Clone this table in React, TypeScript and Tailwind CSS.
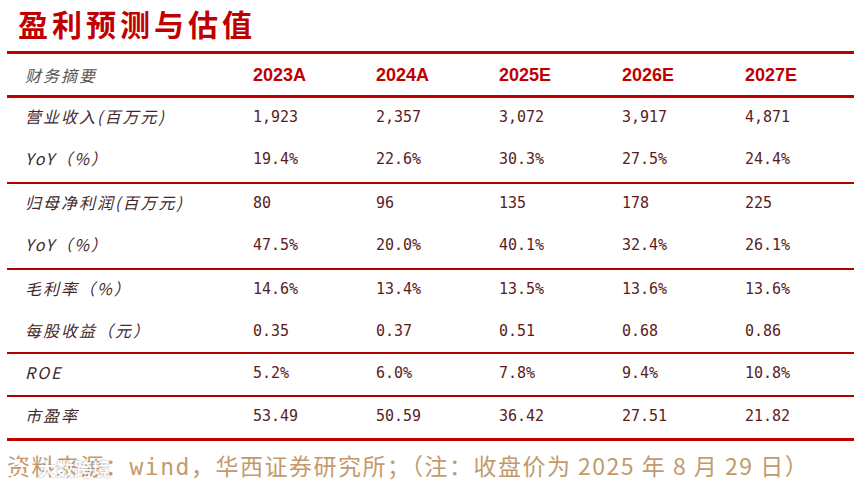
import type { ReactNode } from "react";

const YEARS = ["2023A", "2024A", "2025E", "2026E", "2027E"];

type Row = { label: ReactNode; values: string[]; h: string };

// groups of rows, each group closed by a thin red rule
const GROUPS: Row[][] = [
  [
    { label: "营业收入(百万元)", values: ["1,923", "2,357", "3,072", "3,917", "4,871"], h: "h-[42px]" },
    { label: <><span>YoY</span>（%）</>, values: ["19.4%", "22.6%", "30.3%", "27.5%", "24.4%"], h: "h-[42px]" },
  ],
  [
    { label: "归母净利润(百万元)", values: ["80", "96", "135", "178", "225"], h: "h-[42px]" },
    { label: <><span>YoY</span>（%）</>, values: ["47.5%", "20.0%", "40.1%", "32.4%", "26.1%"], h: "h-[42px]" },
  ],
  [
    { label: "毛利率（%）", values: ["14.6%", "13.4%", "13.5%", "13.6%", "13.6%"], h: "h-[42px]" },
    { label: "每股收益（元）", values: ["0.35", "0.37", "0.51", "0.68", "0.86"], h: "h-[40px]" },
  ],
  [{ label: "ROE", values: ["5.2%", "6.0%", "7.8%", "9.4%", "10.8%"], h: "h-[41px]" }],
  [{ label: "市盈率", values: ["53.49", "50.59", "36.42", "27.51", "21.82"], h: "h-[41px]" }],
];

const GRID = "grid grid-cols-[246px_123px_123px_123px_123px_1fr] items-center";

function DataRow({ row }: { row: Row }) {
  return (
    <div className={`${GRID} ${row.h}`}>
      <div className="pt-[3px] pl-[18px] text-[16px] leading-[20px] italic tracking-[2px] text-[#3f2a2a] font-['Noto_Sans_CJK_SC',sans-serif]">
        {row.label}
      </div>
      {row.values.map((v, i) => (
        <div key={i} className="pt-[5px] text-[15px] leading-[20px] text-[#5a1c1c] font-['DejaVu_Sans_Mono',monospace]">
          {v}
        </div>
      ))}
      <div />
    </div>
  );
}

export default function App() {
  return (
    <div className="relative w-[860px] h-[489px] bg-white overflow-hidden">
      <div className="pt-[8px] pl-[18px] h-[51px] text-[30px] leading-[30px] font-bold tracking-[4px] text-[#c00000] font-['Noto_Sans_CJK_SC',sans-serif]">
        盈利预测与估值
      </div>

      <div className="ml-[7px] w-[847px]">
        <div className="h-[3px] bg-[#c00000]" />
        <div className={`${GRID} h-[41px]`}>
          <div className="pt-[4px] pl-[18px] text-[16px] italic tracking-[2px] text-[#555] font-['Noto_Sans_CJK_SC',sans-serif]">
            财务摘要
          </div>
          {YEARS.map((y) => (
            <div key={y} className="pt-[6px] text-[18px] font-bold text-[#c00000] font-['Liberation_Sans',sans-serif]">
              {y}
            </div>
          ))}
          <div />
        </div>
        <div className="h-[3px] bg-[#c00000]" />

        {GROUPS.map((g, gi) => (
          <div key={gi}>
            {g.map((r, ri) => (
              <DataRow key={ri} row={r} />
            ))}
            {gi < GROUPS.length - 1 ? (
              <div className="h-[2px] bg-[#b00000]" />
            ) : (
              <div className="h-[3px] bg-[#c00000]" />
            )}
          </div>
        ))}
      </div>

      <div className="mt-[11px] pl-[7px] text-[23px] leading-[26px] tracking-[1.5px] text-[#c49a6c] font-['Noto_Sans_CJK_SC',sans-serif] whitespace-nowrap">
        资料来源：<span className="font-['DejaVu_Sans_Mono',monospace]">wind</span>，华西证券研究所；（注：收盘价为 2025 年 8 月 29 日）
      </div>

      {/* watermark */}
      <div className="absolute left-[8px] top-[455px] flex items-center gap-[12px] opacity-90">
        <svg width="18" height="22" viewBox="0 0 18 22" fill="none" stroke="white" strokeWidth="2">
          <path d="M4 4c6-2 11 2 10 8s-8 9-11 5" />
          <circle cx="9" cy="4" r="2" />
        </svg>
        <span className="text-[18px] font-bold text-white [text-shadow:0_0_2px_rgba(0,0,0,0.45)] font-['Noto_Sans_CJK_SC',sans-serif]">
          大数跨境
        </span>
      </div>
    </div>
  );
}
